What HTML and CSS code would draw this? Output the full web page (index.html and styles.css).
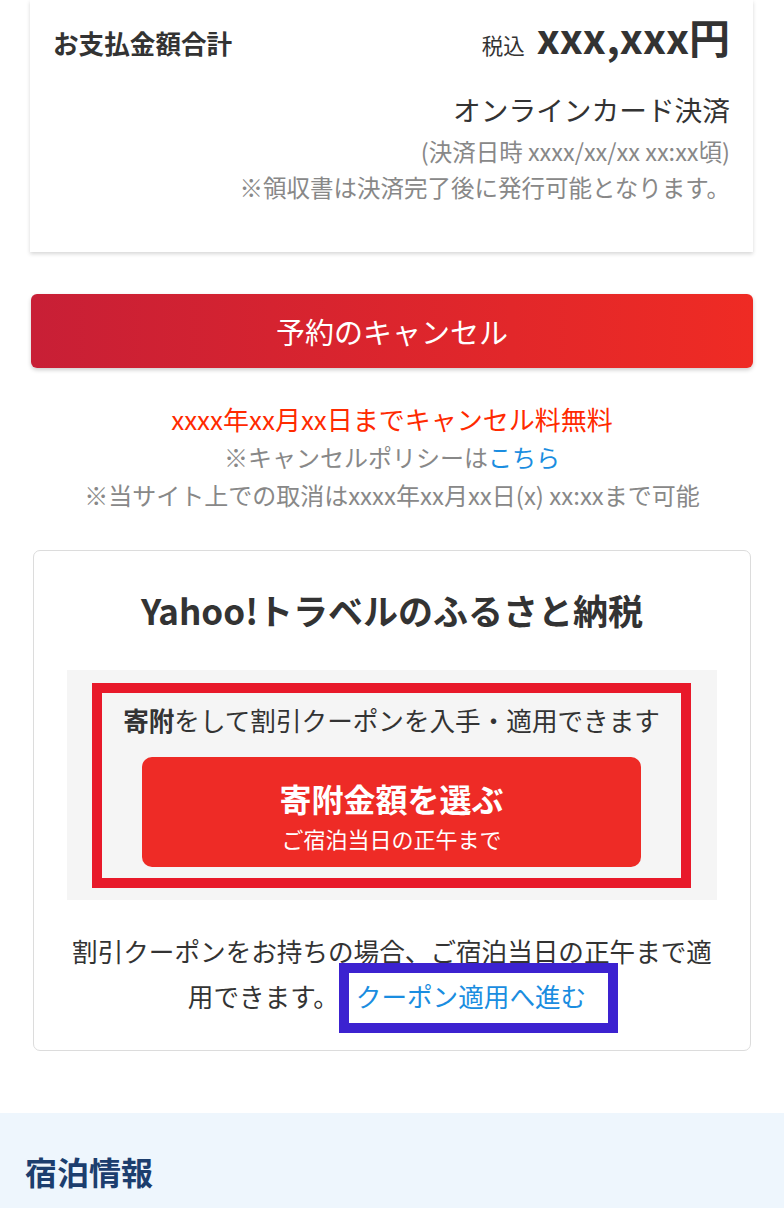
FILE: index.html
```html
<!DOCTYPE html>
<html lang="ja">
<head>
<meta charset="utf-8">
<title>予約詳細</title>
<link rel="stylesheet" href="styles.css">
</head>
<body>
<main class="page">
  <section class="pay-card">
    <div class="pay-row">
      <div class="pay-label">お支払金額合計</div>
      <div class="pay-amount"><span class="tax">税込</span><span class="price">xxx,xxx円</span></div>
    </div>
    <div class="pay-method">オンラインカード決済</div>
    <div class="pay-note">(決済日時 xxxx/xx/xx xx:xx頃)</div>
    <div class="pay-note">※領収書は決済完了後に発行可能となります。</div>
  </section>

  <button class="cancel-btn" type="button">予約のキャンセル</button>

  <div class="cancel-notes">
    <p class="free">xxxx年xx月xx日までキャンセル料無料</p>
    <p class="note">※キャンセルポリシーは<a class="link" href="#">こちら</a></p>
    <p class="note">※当サイト上での取消はxxxx年xx月xx日(x) xx:xxまで可能</p>
  </div>

  <section class="furusato">
    <h2 class="furusato-title">Yahoo!トラベルのふるさと納税</h2>
    <div class="donate-area">
      <div class="donate-frame">
        <p class="donate-lead"><strong>寄附</strong>をして割引クーポンを入手・適用できます</p>
        <a class="donate-btn" href="#">
          <span class="donate-main">寄附金額を選ぶ</span>
          <span class="donate-sub">ご宿泊当日の正午まで</span>
        </a>
      </div>
    </div>
    <p class="coupon-text">割引クーポンをお持ちの場合、ご宿泊当日の正午まで適用できます。<span class="coupon-mark"><a class="link" href="#">クーポン適用へ進む</a></span></p>
  </section>

  <section class="stay">
    <h2 class="stay-title">宿泊情報</h2>
  </section>
</main>
</body>
</html>
```

FILE: styles.css
```css
* { box-sizing: border-box; }
html, body { margin: 0; padding: 0; background: #fff; }
body {
  font-family: "Noto Sans CJK JP", "Noto Sans", sans-serif;
  color: #333;
  font-size: 25.6px;
}
p { margin: 0; }
h2 { margin: 0; }
a { text-decoration: none; }
.link { color: #1a8de0; }

.pay-card {
  margin: 0 31px 0 30px;
  padding: 16px 23px 47px 23px;
  background: #fff;
  box-shadow: 0 2px 4px rgba(0,0,0,0.16);
}
.pay-row {
  display: flex;
  justify-content: space-between;
  align-items: baseline;
  line-height: 40px;
}
.pay-label { font-weight: 700; font-size: 25.6px; }
.pay-amount { display: flex; align-items: baseline; gap: 12px; }
.tax { font-size: 21.5px; }
.price { font-size: 41px; font-weight: 700; }
.pay-method {
  margin-top: 24px;
  text-align: right;
  font-size: 27.7px;
  line-height: 40px;
}
.pay-method + .pay-note { margin-top: 4px; }
.pay-note {
  text-align: right;
  font-size: 23.5px;
  line-height: 36px;
  color: #888;
}

.cancel-btn {
  display: block;
  width: 722px;
  height: 74px;
  margin: 42px 31px 0 31px;
  border: 0;
  border-radius: 6px;
  background: linear-gradient(90deg, #c81f36 0%, #ef2b24 100%);
  box-shadow: 0 2px 4px rgba(0,0,0,0.2);
  color: #fff;
  font-family: inherit;
  font-size: 29px;
}

.cancel-notes {
  margin-top: 32px;
  text-align: center;
  line-height: 38px;
}
.free { color: #ff2a00; font-size: 26px; }
.note { color: #888; font-size: 24px; }

.furusato {
  margin: 36px 33px 0 33px;
  border: 1px solid #dcdcdc;
  border-radius: 7px;
  padding: 37px 33px 32px 33px;
}
.furusato-title {
  text-align: center;
  font-size: 35px;
  line-height: 44px;
  font-weight: 700;
}
.donate-area {
  margin-top: 38px;
  background: #f5f5f5;
  padding: 13px 26px 12px 25px;
}
.donate-frame {
  border: 10px solid #e8192a;
  padding: 9px 0 11px 0;
}
.donate-lead {
  text-align: center;
  line-height: 36px;
  white-space: nowrap;
}
.donate-lead strong { font-weight: 700; }
.donate-btn {
  margin: 19px 40px 0 40px;
  height: 110px;
  display: flex;
  flex-direction: column;
  align-items: center;
  padding-top: 21px;
  background: #ee2b26;
  border-radius: 10px;
  color: #fff;
}
.donate-main { font-size: 32px; font-weight: 700; line-height: 40px; }
.donate-sub { font-size: 22px; line-height: 34px; margin-top: 3px; }

.coupon-text {
  margin-top: 28px;
  text-align: center;
  line-height: 45px;
}
.coupon-mark {
  position: relative;
  display: inline-block;
  padding: 0 10px 0 17px;
}
.coupon-mark::after {
  content: "";
  position: absolute;
  left: 0;
  right: -22px;
  top: -10px;
  bottom: -15px;
  border: 10px solid #3c22d0;
}

.stay {
  margin-top: 62px;
  background: #eef6fd;
  padding: 36px 25px 40px 25px;
}
.stay-title {
  font-size: 32px;
  line-height: 44px;
  font-weight: 700;
  color: #1c3e6e;
}
```
